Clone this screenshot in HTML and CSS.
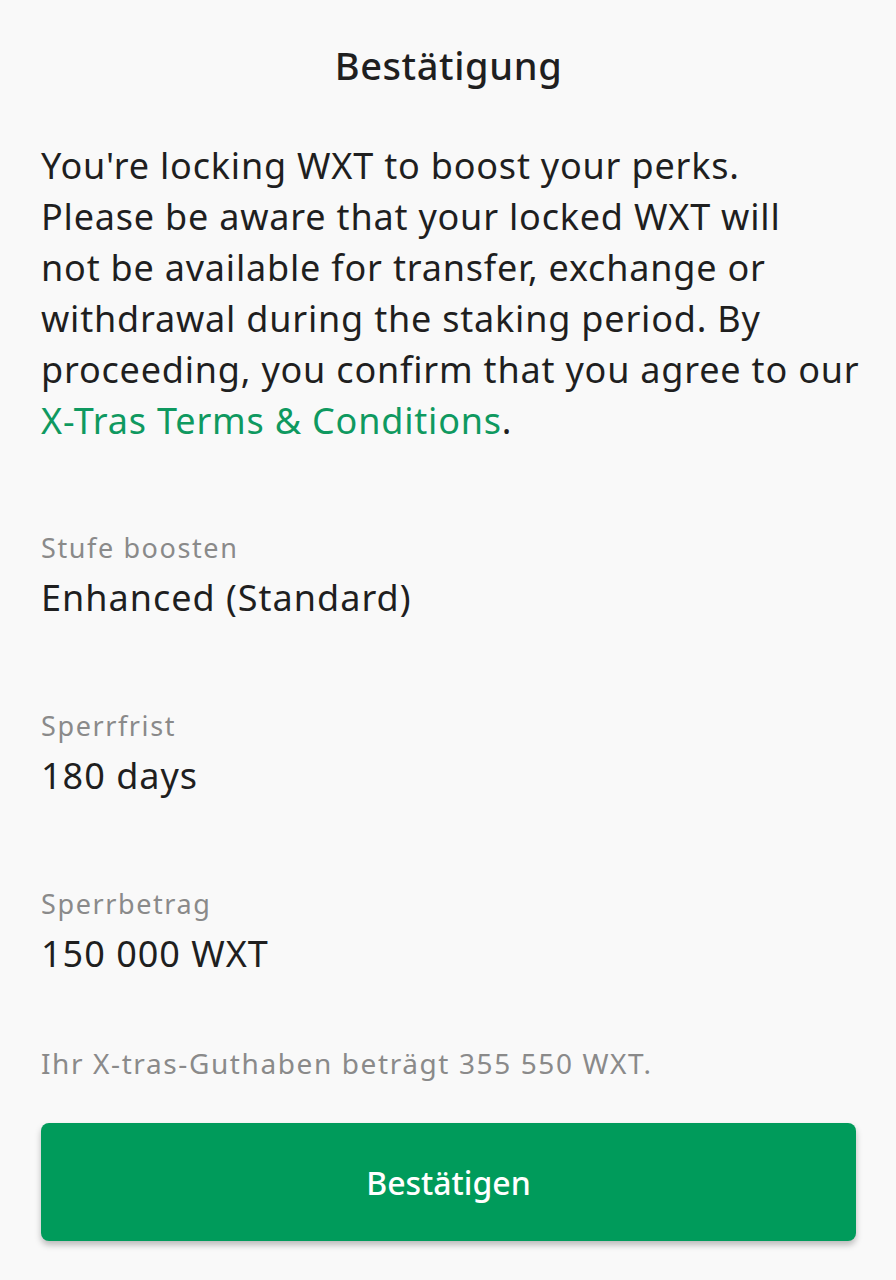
FILE: index.html
```html
<!DOCTYPE html>
<html lang="de">
<head>
<meta charset="utf-8">
<title>Bestätigung</title>
<link rel="stylesheet" href="styles.css">
</head>
<body>
<main class="sheet">
  <h1 class="title">Bestätigung</h1>
  <p class="intro">You're locking WXT to boost your perks.<br>Please be aware that your locked WXT will<br>not be available for transfer, exchange or<br>withdrawal during the staking period. By<br>proceeding, you confirm that you agree to our<br><a class="link" href="#">X-Tras Terms &amp; Conditions</a>.</p>
  <dl class="details">
    <div class="item">
      <dt class="label">Stufe boosten</dt>
      <dd class="value">Enhanced (Standard)</dd>
    </div>
    <div class="item">
      <dt class="label">Sperrfrist</dt>
      <dd class="value">180 days</dd>
    </div>
    <div class="item">
      <dt class="label">Sperrbetrag</dt>
      <dd class="value">150 000 WXT</dd>
    </div>
  </dl>
  <p class="note">Ihr X-tras-Guthaben beträgt 355 550 WXT.</p>
  <button class="confirm" type="button">Bestätigen</button>
</main>
</body>
</html>
```
FILE: styles.css
```css
html, body {
  margin: 0;
  padding: 0;
  background: #f9f9f9;
}
body {
  font-family: "Noto Sans", Roboto, "Liberation Sans", sans-serif;
  color: #1f1f1f;
  width: 896px;
  height: 1280px;
  overflow: hidden;
}
.sheet {
  display: flex;
  flex-direction: column;
  padding: 0 40px 0 41px;
}
.title {
  margin: 38px 0 0;
  text-align: center;
  font-size: 38px;
  font-weight: 500;
  line-height: 54px;
  letter-spacing: 0.6px;
}
.intro {
  margin: 48px 0 0;
  font-size: 36px;
  line-height: 51px;
  font-weight: 400;
  letter-spacing: 0.8px;
  white-space: nowrap;
}
.link {
  color: #0f9960;
  text-decoration: none;
}
.details {
  margin: 85px 0 0;
  display: flex;
  flex-direction: column;
  gap: 86px;
}
.item {
  display: flex;
  flex-direction: column;
}
.label {
  font-size: 27px;
  line-height: 34px;
  color: #8a8a8a;
  letter-spacing: 1.6px;
}
.value {
  margin: 0;
  font-size: 36px;
  line-height: 50px;
  margin-top: 8px;
  letter-spacing: 1px;
}
.note {
  margin: 66px 0 0;
  font-size: 28px;
  line-height: 36px;
  color: #8a8a8a;
  letter-spacing: 1.6px;
}
.confirm {
  margin-top: 42px;
  height: 118px;
  border: none;
  border-radius: 8px;
  background: #009b5b;
  color: #ffffff;
  font-family: inherit;
  font-size: 32px;
  font-weight: 500;
  box-shadow: 0 4px 6px rgba(0, 0, 0, 0.25);
}
```
